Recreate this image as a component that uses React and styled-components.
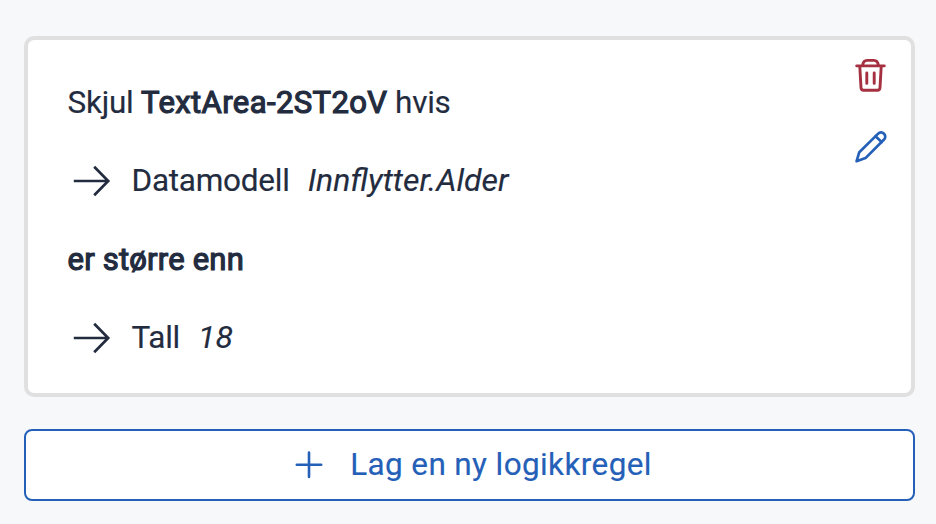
import React from "react";
import styled, { createGlobalStyle } from "styled-components";

const GlobalStyle = createGlobalStyle`
  * { box-sizing: border-box; }
  body {
    margin: 0;
    background: #f7f8fa;
    color: #232c3f;
    font-family: Roboto, "Noto Sans", sans-serif;
    font-size: 31.5px;
  }
`;

const Panel = styled.main`
  display: flex;
  flex-direction: column;
  gap: 32px;
  height: 524px;
  padding: 36px 21px 0 24px;
`;

const Card = styled.section`
  display: flex;
  justify-content: space-between;
  height: 361px;
  padding: 38px 23px 0 39.5px;
  background: #fff;
  border: 4px solid #e0e0e0;
  border-radius: 10px;
`;

const Rule = styled.div`
  display: flex;
  flex-direction: column;
  gap: 30.3px;
`;

const Line = styled.div`
  display: flex;
  align-items: center;
  height: 48px;
  line-height: 48px;
  white-space: pre;
  letter-spacing: -0.25px;
  -webkit-text-stroke: 0.15px currentColor;
`;

const Text = styled.span`
  padding-top: 2px;
`;

const Strong = styled.span`
  font-size: 31px;
  font-weight: 400;
  letter-spacing: ${(p) => (p.$tight ? "0.2px" : "0.4px")};
  -webkit-text-stroke: 1.2px currentColor;
`;

const Value = styled.em`
  margin-left: 18px;
  font-size: 32px;
  letter-spacing: normal;
`;

const Arrow = styled.svg`
  width: 48px;
  height: 48px;
  margin-right: 16px;
`;

const Actions = styled.div`
  display: flex;
  flex-direction: column;
  gap: 36px;
  margin-top: -22px;
`;

const IconButton = styled.button`
  display: flex;
  width: 36px;
  height: 36px;
  padding: 0;
  border: 0;
  background: none;
  color: ${(p) => (p.$danger ? "#a5303f" : "#2560b8")};
`;

const AddButton = styled.button`
  display: flex;
  align-items: center;
  justify-content: center;
  gap: 26px;
  height: 72px;
  padding: 0 0 2px 7px;
  background: #fff;
  border: 2px solid #2560b8;
  border-radius: 8px;
  color: #2560b8;
  font: inherit;
  letter-spacing: 0.38px;
  -webkit-text-stroke: 0.15px currentColor;
`;

function ArrowIcon() {
  return (
    <Arrow viewBox="0 0 48 48" fill="none" stroke="currentColor" strokeWidth="2.7" aria-hidden="true">
      <path d="M5.8 25H40.2M26.2 10.8L40.2 25L26.2 39.2" />
    </Arrow>
  );
}

function TrashIcon() {
  return (
    <svg width="36" height="36" viewBox="0 0 36 36" fill="none" stroke="currentColor" strokeWidth="2.9" strokeLinecap="round" strokeLinejoin="round" aria-hidden="true">
      <path d="M4.7 9.9H32.3" />
      <path d="M10.7 9.5C11 6 12.5 4.4 15.2 4.4H21.8C24.5 4.4 26 6 26.3 9.5" />
      <path d="M7.8 10.5L9 31.6C9.2 33.6 9.9 34.2 11.6 34.2H25.4C27.1 34.2 27.8 33.6 28 31.6L29.2 10.5" />
      <path d="M14.8 17V27.4M22.2 17V27.4" />
    </svg>
  );
}

function PencilIcon() {
  return (
    <svg width="36" height="36" viewBox="0 0 36 36" fill="none" stroke="currentColor" strokeWidth="2.7" strokeLinecap="round" strokeLinejoin="round" aria-hidden="true">
      <path d="M4.6 33.2L7.3 24.2L25.9 5.9C27.8 4 30.3 4 32 5.7C33.7 7.4 33.7 9.9 31.8 11.8L13.5 30.1Z" />
      <path d="M23.5 8.3L29.6 14" />
    </svg>
  );
}

function PlusIcon() {
  return (
    <svg width="30" height="30" viewBox="0 0 30 30" fill="none" stroke="currentColor" strokeWidth="2.6" strokeLinecap="round" aria-hidden="true">
      <path d="M2.8 15.7H27.2M15 3.5V27.9" />
    </svg>
  );
}

export default function App() {
  return (
    <>
      <GlobalStyle />
      <Panel>
        <Card>
          <Rule>
            <Line><Text>Skjul <Strong>TextArea-2ST2oV</Strong> hvis</Text></Line>
            <Line><ArrowIcon /><Text>Datamodell</Text><Value>Innflytter.Alder</Value></Line>
            <Line><Text><Strong $tight>er større enn</Strong></Text></Line>
            <Line><ArrowIcon /><Text>Tall</Text><Value>18</Value></Line>
          </Rule>
          <Actions>
            <IconButton $danger aria-label="Slett"><TrashIcon /></IconButton>
            <IconButton aria-label="Rediger"><PencilIcon /></IconButton>
          </Actions>
        </Card>
        <AddButton><PlusIcon />Lag en ny logikkregel</AddButton>
      </Panel>
    </>
  );
}
